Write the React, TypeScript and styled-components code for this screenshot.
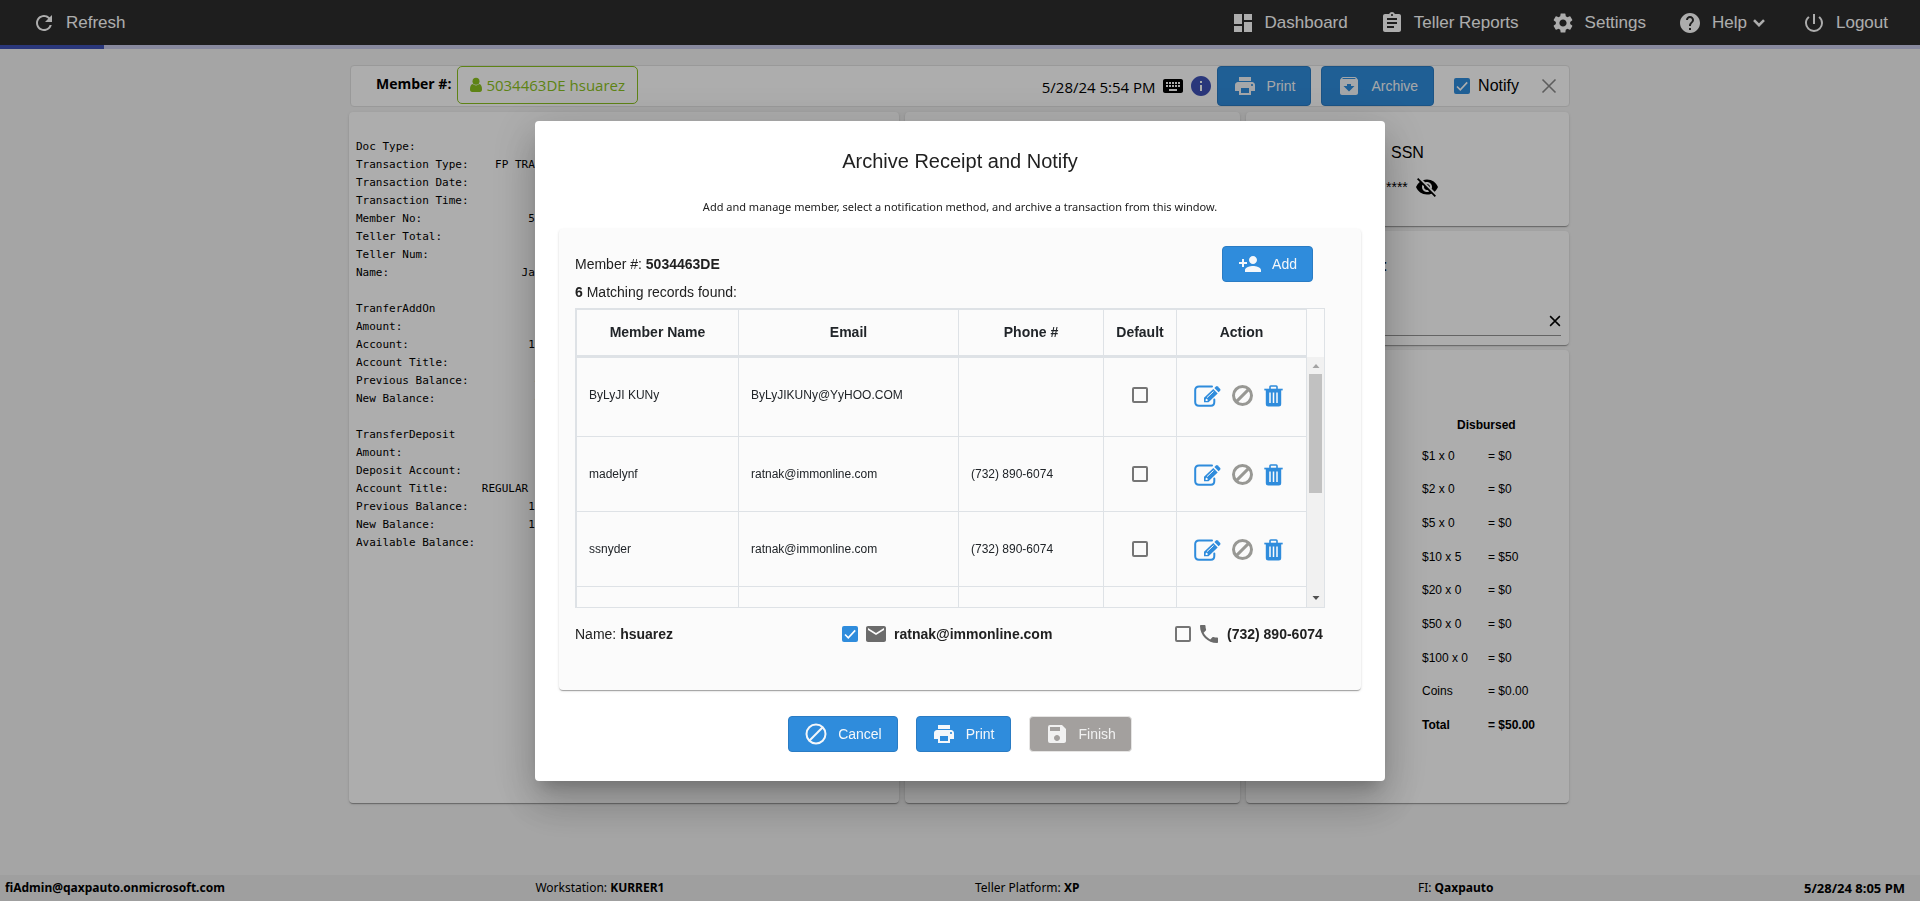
import React from 'react';
import styled, { createGlobalStyle } from 'styled-components';
import {
  MdArchive,
  MdAssignment,
  MdDashboard,
  MdEmail,
  MdHelp,
  MdInfo,
  MdKeyboard,
  MdPersonAdd,
  MdPhone,
  MdPowerSettingsNew,
  MdPrint,
  MdRefresh,
  MdSave,
  MdSettings,
  MdVisibilityOff,
} from 'react-icons/md';

const sans = '"Liberation Sans", Arial, sans-serif';
const humanist = '"Open Sans", "Segoe UI", sans-serif';
const humanistSmall = '"Noto Sans", "Segoe UI", sans-serif';
const mono = '"DejaVu Sans Mono", Consolas, monospace';
const blue = '#2f8cdc';
const line = '#dee2e6';
const cardShadow =
  '0 2px 1px -1px rgba(0,0,0,.2), 0 1px 1px 0 rgba(0,0,0,.14), 0 1px 3px 0 rgba(0,0,0,.12)';

const GlobalStyle = createGlobalStyle`
  * { box-sizing: border-box; }
  body { margin: 0; background: #f3f3f3; font-family: ${sans}; color: #000; }
  button, input { font: inherit; margin: 0; }
  svg { display: block; flex: none; }
`;

const Page = styled.div`
  min-height: 100vh;
  display: flex;
  flex-direction: column;
`;

const Header = styled.header`
  height: 45px;
  padding: 0 32px;
  display: flex;
  align-items: center;
  justify-content: space-between;
  background: #2d2d2d;
  color: #fff;
`;

const Nav = styled.nav`
  display: flex;
  gap: 32px;
`;

const NavLink = styled.a`
  display: flex;
  align-items: center;
  gap: 10px;
  color: inherit;
  font-size: 17px;
  line-height: 20px;
  text-decoration: none;
`;

const HelpLabel = styled.span`
  padding-right: 5px;
  display: flex;
  align-items: center;
  gap: 6px;
`;

const Progress = styled.div`
  height: 4px;
  background: #c9cae9;
`;

const ProgressValue = styled.div`
  width: 104px;
  height: 4px;
  background: #3f51b5;
`;

const Workspace = styled.main`
  width: 100%;
  max-width: 1220px;
  margin: 16px auto;
`;

const Toolbar = styled.div`
  height: 42px;
  display: flex;
  align-items: flex-start;
  padding: 0 12px 0 25px;
  background: #fff;
  border: 1px solid #e2e2e2;
  border-radius: 4px;
`;

const MemberLabel = styled.b`
  margin-right: 6px;
  font: 700 14px/36px ${humanist};
`;

const MemberChip = styled.button`
  height: 38px;
  padding: 0 12px;
  display: flex;
  align-items: center;
  gap: 4px;
  border: 1px solid #8bc220;
  border-radius: 5px;
  background: none;
  color: #8bc220;
  font: 15px/38px ${humanist};
`;

const ToolbarEnd = styled.div`
  height: 40px;
  margin-left: auto;
  display: flex;
  align-items: center;
`;

const Stamp = styled.span`
  margin-right: 5px;
  padding-top: 2px;
  font: 15px/38px ${humanist};
`;

const IconSlot = styled.span<{ $color?: string; $after: number }>`
  margin-right: ${(p) => p.$after}px;
  color: ${(p) => p.$color ?? 'inherit'};
`;

const Button = styled.button<{ $tall?: boolean; $after?: number }>`
  height: ${(p) => (p.$tall ? 40 : 36)}px;
  margin-right: ${(p) => p.$after ?? 0}px;
  padding: 0 15px;
  display: flex;
  align-items: center;
  gap: 10px;
  border: 1px solid #2a7cc4;
  border-radius: 4px;
  background: ${blue};
  color: #f4f7fa;
  font-size: 14px;
  white-space: nowrap;

  &:disabled {
    border-color: #e6e5e4;
    background: #a3a09e;
    color: #f1f1f1;
  }
`;

const PlainButton = styled.button`
  padding: 0;
  border: 0;
  background: none;
  color: inherit;
`;

const Tick = styled.span`
  width: 16px;
  height: 16px;
  display: grid;
  flex: none;

  input,
  svg {
    grid-area: 1 / 1;
  }
  input {
    width: 16px;
    height: 16px;
    appearance: none;
    border: 2px solid #757575;
    border-radius: 2px;
  }
  input:checked {
    border: 0;
    background: ${blue};
  }
  svg {
    pointer-events: none;
    visibility: hidden;
  }
  input:checked + svg {
    visibility: visible;
  }
`;

const NotifyLabel = styled.label`
  margin-right: 22px;
  display: flex;
  align-items: center;
  gap: 8px;
  font-size: 16px;
`;

const Cards = styled.div`
  margin: 5px 1px 0 -1px;
  display: grid;
  grid-template-columns: 550fr 335fr 323fr;
  gap: 6px;
`;

const Stack = styled.div`
  display: flex;
  flex-direction: column;
  gap: 5px;
`;

const Card = styled.section<{ $height?: number }>`
  ${(p) => (p.$height ? `height: ${p.$height}px;` : '')}
  background: #fff;
  border-radius: 4px;
  box-shadow: ${cardShadow};
`;

const Receipt = styled.pre`
  margin: 0;
  padding: 26px 7px;
  font: 11px/18px ${mono};
`;

const SsnCard = styled(Card)`
  padding: 31px 130px 0 140px;
  font-size: 16px;
`;

const SsnTitle = styled.div`
  padding-left: 5px;
  line-height: 20px;
`;

const SsnValue = styled.div`
  margin-top: 12px;
  display: flex;
  align-items: center;
  gap: 7px;
  font-size: 14px;
  line-height: 24px;
`;

const NoteCard = styled(Card)`
  padding: 25px 8px 9px;
  display: flex;
  flex-direction: column;
  justify-content: space-between;
`;

const NoteTitle = styled.div`
  padding-left: 129px;
  font-size: 16px;
  line-height: 20px;
`;

const NoteLine = styled.div`
  height: 34px;
  padding: 7px 0 3px;
  display: flex;
  justify-content: flex-end;
  border-bottom: 1px solid #949494;
`;

const CashCard = styled(Card)`
  padding: 60px 32px 61px 176px;
`;

const CashTable = styled.table`
  height: 332px;
  border-spacing: 0;
  font-size: 12px;
  line-height: 14px;

  th,
  td {
    padding: 0;
    text-align: left;
  }
  thead th {
    height: 29px;
    padding-left: 35px;
  }
  td:first-child {
    width: 66px;
  }
  tr:last-child td {
    font-weight: bold;
  }
`;

const Footer = styled.footer`
  height: 26px;
  margin-top: auto;
  padding: 0 15px 0 5px;
  display: flex;
  align-items: center;
  justify-content: space-between;
  background: #eaebeb;
  font: 12px/26px ${humanistSmall};
`;

const PlatformItem = styled.span`
  padding-right: 28px;
`;

const Clock = styled.b`
  font-size: 13px;
`;

const Backdrop = styled.div`
  position: fixed;
  inset: 0;
  display: grid;
  place-items: center;
  background: rgba(0, 0, 0, 0.32);
`;

const Dialog = styled.section`
  width: 100%;
  max-width: 850px;
  padding: 24px 24px 29px;
  background: #fff;
  border-radius: 4px;
  box-shadow: 0 11px 15px -7px rgba(0, 0, 0, 0.2), 0 24px 38px 3px rgba(0, 0, 0, 0.14),
    0 9px 46px 8px rgba(0, 0, 0, 0.12);
  color: #212121;
`;

const Title = styled.h1`
  margin: 0;
  font-weight: 400;
  font-size: 20px;
  line-height: 32px;
  text-align: center;
`;

const Intro = styled.p`
  margin: 20px 0 12px;
  font: 11px/20px ${humanistSmall};
  text-align: center;
`;

const Panel = styled.div`
  height: 461px;
  padding: 17px 36px 0 16px;
  background: #fbfbfb;
  border-radius: 4px;
  box-shadow: ${cardShadow};
  font-size: 14px;
`;

const PanelHead = styled.div`
  display: flex;
  align-items: center;
  justify-content: space-between;
  padding-right: 12px;
`;

const Found = styled.div`
  padding-bottom: 6px;
  line-height: 20px;
`;

const TableFrame = styled.div`
  height: 300px;
  display: flex;
  border: 1px solid ${line};
  overflow: hidden;
`;

const MemberTable = styled.table`
  flex: 1;
  table-layout: fixed;
  border-collapse: separate;
  border-spacing: 0;
  border: solid ${line};
  border-width: 1px 0 0 1px;
  color: #212529;

  th {
    height: 48px;
    padding: 0;
    border: solid ${line};
    border-width: 0 1px 3px 0;
    font-size: 14px;
  }
  td {
    height: 75px;
    padding: 0 12px;
    border: solid ${line};
    border-width: 0 1px 1px 0;
    font-size: 12px;
  }
  tbody tr:first-child td {
    height: 79px;
    padding-bottom: 4px;
  }
`;

const Col = styled.col<{ $w: number }>`
  width: ${(p) => p.$w}px;
`;

const Centered = styled.div`
  display: flex;
  justify-content: center;
`;

const Actions = styled.div`
  padding: 2px 0 0 5px;
  display: flex;
  align-items: center;
  gap: 11px;
`;

const ScrollColumn = styled.div`
  width: 17px;
  padding-top: 48px;
  display: flex;
`;

const ScrollTrack = styled.div`
  flex: 1;
  padding: 5px 0;
  display: flex;
  flex-direction: column;
  align-items: center;
  background: #f1f1f1;
`;

const ScrollThumb = styled.div`
  width: 13px;
  height: 119px;
  margin: 5px 0 auto;
  background: #c1c1c1;
`;

const Contact = styled.div`
  padding-top: 14px;
  display: grid;
  grid-template-columns: 267px 333px 1fr;
  align-items: center;
  line-height: 20px;
`;

const ContactLabel = styled.label`
  display: flex;
  align-items: center;
  gap: 6px;

  > svg {
    color: #6b6b6b;
  }
`;

const DialogActions = styled.div`
  margin-top: 26px;
  display: flex;
  justify-content: center;
  gap: 18px;
`;

function Checkbox({ checked = false, label }: { checked?: boolean; label?: string }) {
  return (
    <Tick>
      <input type="checkbox" defaultChecked={checked} aria-label={label} />
      <svg width="16" height="16" viewBox="0 0 16 16" fill="none" stroke="#fff" strokeWidth="1.6">
        <path d="M3 8.5l3.3 3.3L13.2 4.4" />
      </svg>
    </Tick>
  );
}

function ForbidIcon({ stroke = 2, color = 'currentColor', size = 24 }) {
  const r = 10.5 - stroke / 2;
  const d = r * 0.7071;
  const c = size / 2;
  return (
    <svg width={size} height={size} viewBox={`0 0 ${size} ${size}`} fill="none" stroke={color} strokeWidth={stroke}>
      <circle cx={c} cy={c} r={r} />
      <path d={`M${c - d} ${c + d}L${c + d} ${c - d}`} />
    </svg>
  );
}

function ChevronIcon() {
  return (
    <svg width="12" height="8" viewBox="0 0 12 8" fill="none" stroke="currentColor" strokeWidth="2.6">
      <path d="M1 1.200l5 5 5-5" />
    </svg>
  );
}

function EditIcon() {
  return (
    <svg width="27" height="22" viewBox="0 0 27 22" fill="none">
      <path
        d="M18 1.500H5Q1.200 1.500 1.200 5v12Q1.200 20.700 5 20.700h12Q20.300 20.700 20.300 17v-2.500"
        stroke={blue}
        strokeWidth="2"
        strokeLinecap="round"
      />
      <path d="M10 17.300v-4.600L19.300 3.900l4.400 4.600-9.200 8.800z" fill={blue} />
      <path d="M20.400 2.900L22 1.400q.9-.8 1.800.1l2.400 2.500q.8.9-.1 1.800l-1.500 1.500z" fill={blue} />
      <path d="M13 12.600l6.500-6.100" stroke="#fbfbfb" strokeWidth="1" />
      <path d="M11.600 14.400v1.500h1.600l.8-.8-1.600-1.600z" fill="#fbfbfb" />
    </svg>
  );
}

function TrashIcon() {
  return (
    <svg width="19" height="22" viewBox="0 0 19 22" fill="none">
      <path d="M6 4V1.800Q6 1 6.800 1h5.400Q13 1 13 1.800V4" stroke={blue} strokeWidth="1.6" />
      <path d="M.3 3.700h18.400v1.700H.3z" fill={blue} />
      <path d="M1.800 5h15.400v14q0 2.500-2.500 2.500H4.300q-2.500 0-2.500-2.500z" fill={blue} />
      <path d="M6 7.500v10.500M9.500 7.500v10.500M13 7.500v10.500" stroke="#fbfbfb" strokeWidth="1.5" />
    </svg>
  );
}

function UserIcon() {
  return (
    <svg width="12" height="16" viewBox="0 0 12 16" fill="currentColor">
      <circle cx="6" cy="4.300" r="3.500" />
      <path d="M2.700 7Q6 9.800 9.300 7q2.700.700 2.700 5.300 0 2.700-2.200 2.700H2.200Q0 15 0 12.300 0 7.700 2.700 7z" />
    </svg>
  );
}

function CloseIcon({ size, color, weight }: { size: number; color: string; weight: number }) {
  return (
    <svg width={size} height={size} viewBox="0 0 16 16" stroke={color} strokeWidth={weight}>
      <path d="M1.500 1.500l13 13M14.500 1.500l-13 13" />
    </svg>
  );
}

function ScrollArrow({ up = false }) {
  return (
    <svg width="8" height="7" viewBox="0 0 8 7" fill={up ? '#a3a3a3' : '#505050'}>
      <path d={up ? 'M.5 6L4 2l3.500 4z' : 'M.5 1L4 5l3.500-4z'} />
    </svg>
  );
}

const receiptText = `Doc Type:
Transaction Type:    FP TRA
Transaction Date:
Transaction Time:
Member No:                5
Teller Total:
Teller Num:
Name:                    Ja

TranferAddOn
Amount:
Account:                  1
Account Title:
Previous Balance:          4
New Balance:               4

TransferDeposit
Amount:
Deposit Account:
Account Title:     REGULAR
Previous Balance:         1
New Balance:              1
Available Balance:`;

const cash = [
  ['$1 x 0', '= $0'],
  ['$2 x 0', '= $0'],
  ['$5 x 0', '= $0'],
  ['$10 x 5', '= $50'],
  ['$20 x 0', '= $0'],
  ['$50 x 0', '= $0'],
  ['$100 x 0', '= $0'],
  ['Coins', '= $0.00'],
  ['Total', '= $50.00'],
];

const members = [
  { name: 'ByLyJI KUNy', email: 'ByLyJIKUNy@YyHOO.COM', phone: '' },
  { name: 'madelynf', email: 'ratnak@immonline.com', phone: '(732) 890-6074' },
  { name: 'ssnyder', email: 'ratnak@immonline.com', phone: '(732) 890-6074' },
];

export default function App() {
  return (
    <>
      <GlobalStyle />
      <Page>
        <Header>
          <NavLink href="#refresh">
            <MdRefresh size={24} />
            Refresh
          </NavLink>
          <Nav>
            <NavLink href="#dashboard">
              <MdDashboard size={24} />
              Dashboard
            </NavLink>
            <NavLink href="#reports">
              <MdAssignment size={24} />
              Teller Reports
            </NavLink>
            <NavLink href="#settings">
              <MdSettings size={24} />
              Settings
            </NavLink>
            <NavLink href="#help">
              <MdHelp size={24} />
              <HelpLabel>
                Help
                <ChevronIcon />
              </HelpLabel>
            </NavLink>
            <NavLink href="#logout">
              <MdPowerSettingsNew size={24} />
              Logout
            </NavLink>
          </Nav>
        </Header>
        <Progress>
          <ProgressValue />
        </Progress>

        <Workspace>
          <Toolbar>
            <MemberLabel>Member #:</MemberLabel>
            <MemberChip>
              <UserIcon />
              5034463DE hsuarez
            </MemberChip>
            <ToolbarEnd>
              <Stamp>5/28/24 5:54 PM</Stamp>
              <IconSlot $after={4}>
                <MdKeyboard size={24} />
              </IconSlot>
              <IconSlot $after={4} $color="#3f51b5">
                <MdInfo size={24} />
              </IconSlot>
              <Button $tall $after={10}>
                <MdPrint size={24} />
                Print
              </Button>
              <Button $tall $after={20}>
                <MdArchive size={24} />
                Archive
              </Button>
              <NotifyLabel>
                <Checkbox checked />
                Notify
              </NotifyLabel>
              <PlainButton aria-label="Close">
                <CloseIcon size={16} color="#8a8a8a" weight={1.6} />
              </PlainButton>
            </ToolbarEnd>
          </Toolbar>

          <Cards>
            <Card>
              <Receipt>{receiptText}</Receipt>
            </Card>
            <Card />
            <Stack>
              <SsnCard $height={114}>
                <SsnTitle>SSN</SsnTitle>
                <SsnValue>
                  ****
                  <MdVisibilityOff size={24} />
                </SsnValue>
              </SsnCard>
              <NoteCard $height={114}>
                <NoteTitle>:</NoteTitle>
                <NoteLine>
                  <PlainButton aria-label="Clear">
                    <CloseIcon size={12} color="#000" weight={2} />
                  </PlainButton>
                </NoteLine>
              </NoteCard>
              <CashCard>
                <CashTable>
                  <thead>
                    <tr>
                      <th colSpan={2}>Disbursed</th>
                    </tr>
                  </thead>
                  <tbody>
                    {cash.map(([unit, sum]) => (
                      <tr key={unit}>
                        <td>{unit}</td>
                        <td>{sum}</td>
                      </tr>
                    ))}
                  </tbody>
                </CashTable>
              </CashCard>
            </Stack>
          </Cards>
        </Workspace>

        <Footer>
          <b>fiAdmin@qaxpauto.onmicrosoft.com</b>
          <span>
            Workstation: <b>KURRER1</b>
          </span>
          <PlatformItem>
            Teller Platform: <b>XP</b>
          </PlatformItem>
          <span>
            FI: <b>Qaxpauto</b>
          </span>
          <Clock>5/28/24 8:05 PM</Clock>
        </Footer>
      </Page>

      <Backdrop>
        <Dialog role="dialog" aria-labelledby="dialog-title">
          <Title id="dialog-title">Archive Receipt and Notify</Title>
          <Intro>
            Add and manage member, select a notification method, and archive a transaction from this window.
          </Intro>
          <Panel>
            <PanelHead>
              <span>
                Member #: <b>5034463DE</b>
              </span>
              <Button>
                <MdPersonAdd size={24} />
                Add
              </Button>
            </PanelHead>
            <Found>
              <b>6</b> Matching records found:
            </Found>
            <TableFrame>
              <MemberTable>
                <colgroup>
                  <Col $w={162} />
                  <Col $w={220} />
                  <Col $w={145} />
                  <Col $w={73} />
                  <Col $w={130} />
                </colgroup>
                <thead>
                  <tr>
                    <th>Member Name</th>
                    <th>Email</th>
                    <th>Phone #</th>
                    <th>Default</th>
                    <th>Action</th>
                  </tr>
                </thead>
                <tbody>
                  {members.map((m) => (
                    <tr key={m.name}>
                      <td>{m.name}</td>
                      <td>{m.email}</td>
                      <td>{m.phone}</td>
                      <td>
                        <Centered>
                          <Checkbox label={`Default: ${m.name}`} />
                        </Centered>
                      </td>
                      <td>
                        <Actions>
                          <PlainButton aria-label="Edit">
                            <EditIcon />
                          </PlainButton>
                          <PlainButton aria-label="Disable">
                            <ForbidIcon stroke={3} color="#989894" size={21} />
                          </PlainButton>
                          <PlainButton aria-label="Delete">
                            <TrashIcon />
                          </PlainButton>
                        </Actions>
                      </td>
                    </tr>
                  ))}
                  <tr>
                    <td />
                    <td />
                    <td />
                    <td />
                    <td />
                  </tr>
                </tbody>
              </MemberTable>
              <ScrollColumn>
                <ScrollTrack>
                  <ScrollArrow up />
                  <ScrollThumb />
                  <ScrollArrow />
                </ScrollTrack>
              </ScrollColumn>
            </TableFrame>
            <Contact>
              <span>
                Name: <b>hsuarez</b>
              </span>
              <ContactLabel>
                <Checkbox checked />
                <MdEmail size={24} />
                <b>ratnak@immonline.com</b>
              </ContactLabel>
              <ContactLabel>
                <Checkbox />
                <MdPhone size={24} />
                <b>(732) 890-6074</b>
              </ContactLabel>
            </Contact>
          </Panel>
          <DialogActions>
            <Button>
              <ForbidIcon />
              Cancel
            </Button>
            <Button>
              <MdPrint size={24} />
              Print
            </Button>
            <Button disabled>
              <MdSave size={24} />
              Finish
            </Button>
          </DialogActions>
        </Dialog>
      </Backdrop>
    </>
  );
}
